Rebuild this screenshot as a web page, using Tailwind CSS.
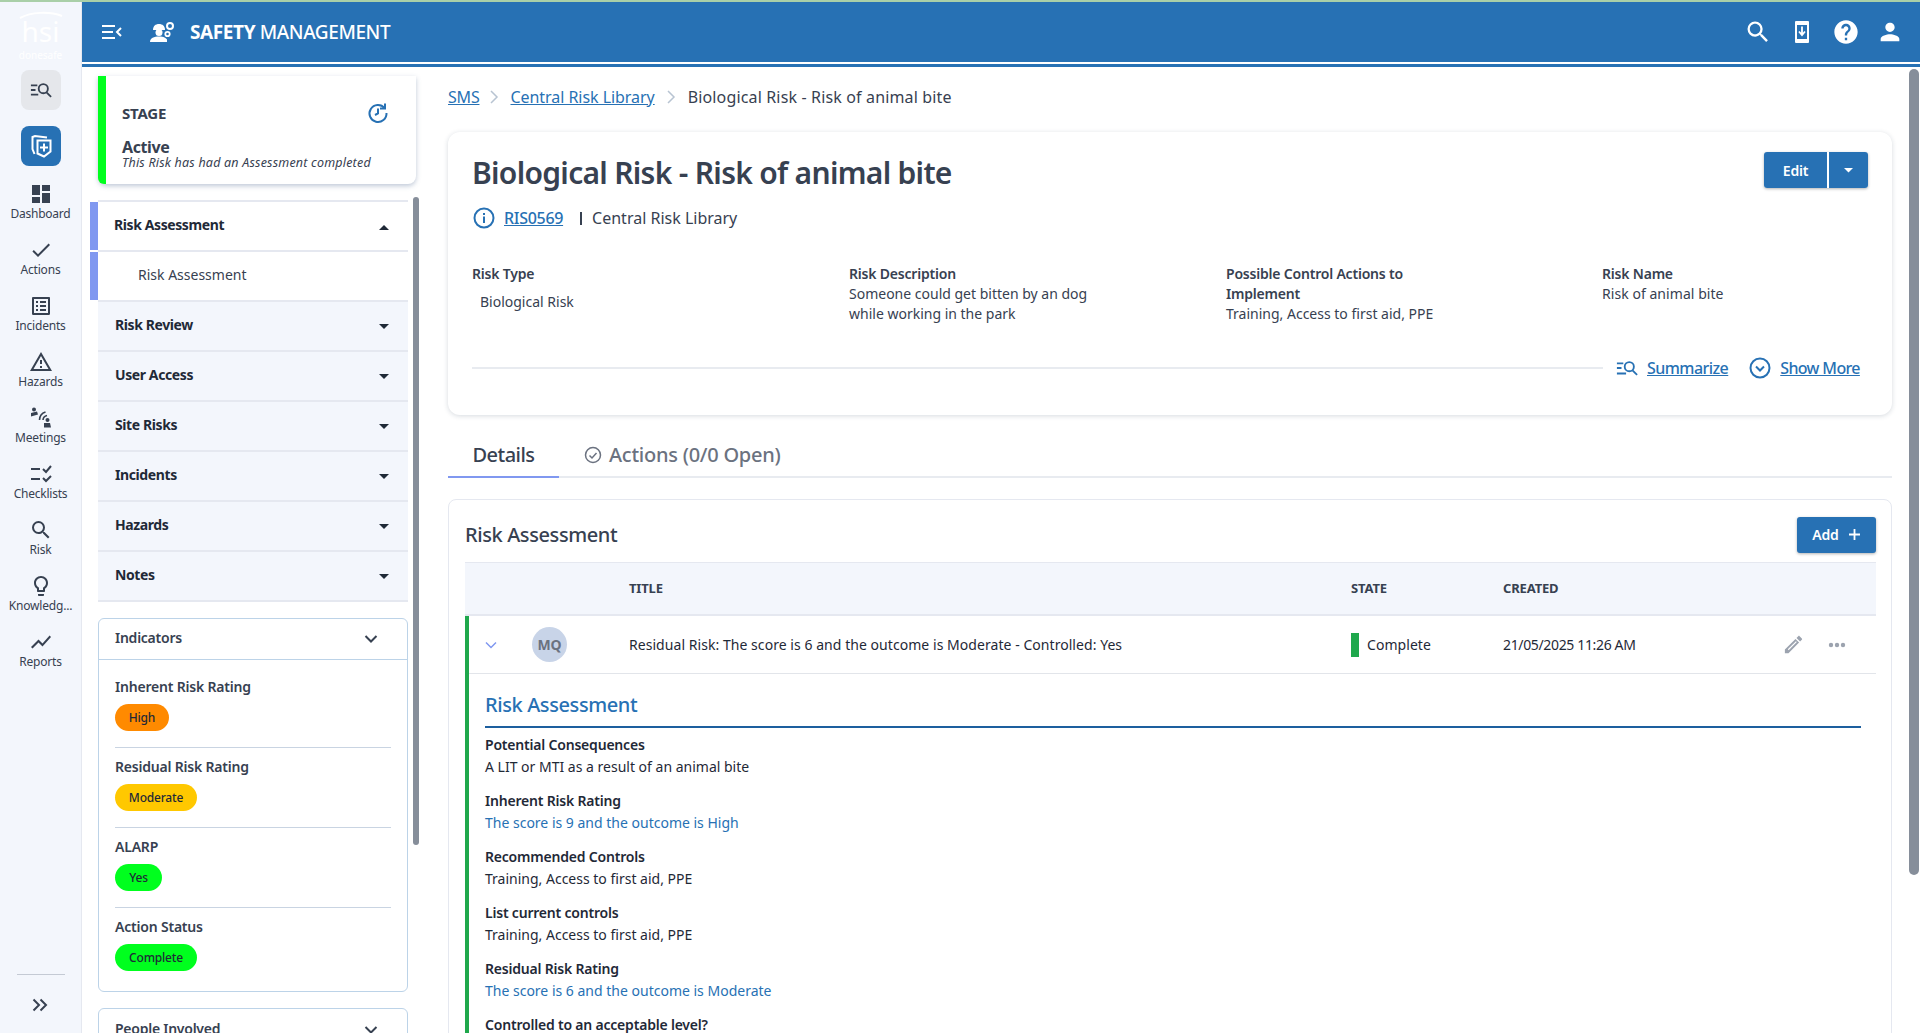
<!DOCTYPE html>
<html lang="en">
<head>
<meta charset="utf-8">
<title>Biological Risk - Risk of animal bite</title>
<script src="https://cdn.jsdelivr.net/npm/@tailwindcss/browser@4"></script>
</head>
<body class="h-[1033px] w-[1920px] overflow-hidden bg-white font-['Noto_Sans',sans-serif] text-[#374151]">
<div class="h-[2px] bg-[#a9cfa8]"></div>
<div class="flex h-[1031px]">
  <!-- Rail -->
  <aside class="flex w-[82px] shrink-0 flex-col items-center border-r border-[#e5e8f0] bg-[#f3f6fc]">
    <div class="flex h-[68px] w-full flex-col items-center pt-[9px] text-white">
      <svg width="44" height="8" viewBox="0 0 44 8"><path d="M1 7C12 1 30 0 43 5" fill="none" stroke="#ffffff" stroke-width="2"/></svg>
      <span class="mt-[-5px] text-[28px] leading-[34px]">hsi</span>
      <span class="text-[10px] leading-[14px]">donesafe</span>
    </div>
    <div class="flex h-[40px] w-[40px] items-center justify-center rounded-lg bg-[#e5e7eb]">
      <svg width="22" height="22" viewBox="0 0 24 24" fill="none" stroke="#374151" stroke-width="2"><path d="M1 7h7M1 12h5M1 17h8"/><circle cx="14.500" cy="10.500" r="5"/><path d="M18 14.500l5 5"/></svg>
    </div>
    <div class="mt-[16px] flex h-[40px] w-[40px] items-center justify-center rounded-lg bg-[#2771b4]">
      <svg width="26" height="26" viewBox="0 0 26 26" fill="none" stroke="#fff" stroke-width="2"><path d="M19 4.500L7 3 4.500 4v12l2 5"/><path d="M9.500 7.500h13v11l-6.500 5-6.500-3z"/><path d="M16 10.500v8M12 14.500h8"/></svg>
    </div>
    <div class="mt-[16px] flex h-[56px] w-full flex-col items-center">
      <svg class="h-[24px] w-[24px]" viewBox="0 0 24 24" fill="#374151"><path d="M3 13h8V3H3v10zm0 8h8v-6H3v6zm10 0h8V11h-8v10zm0-18v6h8V3h-8z"/></svg>
      <span class="text-[12px] leading-[16px] tracking-[-0.25px]">Dashboard</span>
    </div>
    <div class="flex h-[56px] w-full flex-col items-center">
      <svg class="h-[24px] w-[24px]" viewBox="0 0 24 24" fill="#374151"><path d="M9 16.170L4.830 12l-1.420 1.410L9 19 21 7l-1.410-1.410z"/></svg>
      <span class="text-[12px] leading-[16px] tracking-[-0.2px]">Actions</span>
    </div>
    <div class="flex h-[56px] w-full flex-col items-center">
      <svg class="h-[24px] w-[24px]" viewBox="0 0 24 24" fill="#374151"><path d="M19 5v14H5V5h14m1.100-2H3.900c-.5 0-.9.4-.9.9v16.200c0 .4.4.9.9.9h16.200c.4 0 .9-.5.9-.9V3.900c0-.5-.5-.9-.9-.9zM11 7h6v2h-6V7zm0 4h6v2h-6v-2zm0 4h6v2h-6zM7 7h2v2H7zm0 4h2v2H7zm0 4h2v2H7z"/></svg>
      <span class="text-[12px] leading-[16px] tracking-[-0.2px]">Incidents</span>
    </div>
    <div class="flex h-[56px] w-full flex-col items-center">
      <svg class="h-[24px] w-[24px]" viewBox="0 0 24 24" fill="#374151"><path d="M12 5.990L19.530 19H4.470L12 5.990M12 2L1 21h22L12 2zm1 14h-2v2h2v-2zm0-6h-2v4h2v-4z"/></svg>
      <span class="text-[12px] leading-[16px] tracking-[-0.2px]">Hazards</span>
    </div>
    <div class="flex h-[56px] w-full flex-col items-center">
      <svg class="h-[24px] w-[24px]" viewBox="0 0 24 24" fill="none" stroke="#374151" stroke-width="1.600"><circle cx="5" cy="3.500" r="2" fill="#374151" stroke="none"/><path d="M2 7l6-1.500 1 3-7 2z" fill="#374151" stroke="none"/><path d="M14 14a5 5 0 0 1 4-4.500M10.500 14a8.500 8.500 0 0 1 6-8"/><circle cx="18.500" cy="14" r="2" fill="#374151" stroke="none"/><path d="M15 17h6l1 4.500h-7z" fill="#374151" stroke="none"/></svg>
      <span class="text-[12px] leading-[16px] tracking-[-0.2px]">Meetings</span>
    </div>
    <div class="flex h-[56px] w-full flex-col items-center">
      <svg class="h-[24px] w-[24px]" viewBox="0 0 24 24" fill="none" stroke="#374151" stroke-width="2"><path d="M2 7h9M2 17h9M14 7l3 3 5-6M14 16l3 3 5-5"/></svg>
      <span class="text-[12px] leading-[16px] tracking-[-0.25px]">Checklists</span>
    </div>
    <div class="flex h-[56px] w-full flex-col items-center">
      <svg class="h-[24px] w-[24px]" viewBox="0 0 24 24" fill="#374151"><path d="M15.500 14h-.79l-.28-.27A6.471 6.471 0 0 0 16 9.500 6.500 6.500 0 1 0 9.500 16c1.610 0 3.090-.59 4.230-1.570l.27.28v.79l5 4.990L20.490 19l-4.990-5zm-6 0C7.010 14 5 11.990 5 9.500S7.010 5 9.500 5 14 7.010 14 9.500 11.990 14 9.500 14z"/></svg>
      <span class="text-[12px] leading-[16px] tracking-[-0.2px]">Risk</span>
    </div>
    <div class="flex h-[56px] w-full flex-col items-center">
      <svg class="h-[24px] w-[24px]" viewBox="0 0 24 24" fill="#374151"><path d="M9 21c0 .55.45 1 1 1h4c.55 0 1-.45 1-1v-1H9v1zm3-19C8.140 2 5 5.140 5 9c0 2.380 1.190 4.470 3 5.740V17c0 .55.45 1 1 1h6c.55 0 1-.45 1-1v-2.260c1.810-1.270 3-3.360 3-5.740 0-3.860-3.140-7-7-7zm2.850 11.100l-.85.6V16h-4v-2.300l-.85-.6C7.800 12.160 7 10.630 7 9c0-2.760 2.240-5 5-5s5 2.240 5 5c0 1.630-.8 3.160-2.150 4.100z"/></svg>
      <span class="text-[12px] leading-[16px] tracking-[-0.2px]">Knowledg...</span>
    </div>
    <div class="flex h-[56px] w-full flex-col items-center">
      <svg class="h-[24px] w-[24px]" viewBox="0 0 24 24" fill="#374151"><path d="M3.500 18.490l6-6.010 4 4L22 6.920l-1.410-1.410-7.090 7.970-4-4L2 16.990z"/></svg>
      <span class="text-[12px] leading-[16px] tracking-[-0.2px]">Reports</span>
    </div>
    <div class="mt-auto h-[1px] w-[48px] bg-[#c4cad4]"></div>
    <div class="mb-[16px] mt-[18px] flex h-[24px] items-center">
      <svg width="20" height="20" viewBox="0 0 20 20" fill="none" stroke="#374151" stroke-width="2"><path d="M2.500 4.500l5.500 5.500-5.500 5.500M9.500 4.500l5.500 5.500-5.500 5.500"/></svg>
    </div>
  </aside>

  <div class="flex min-w-0 flex-1 flex-col">
    <!-- Header -->
    <header class="flex h-[60px] shrink-0 items-center bg-[#2771b4] text-white">
      <svg class="ml-[19px]" width="22" height="22" viewBox="0 0 22 22" fill="none" stroke="#fff" stroke-width="2"><path d="M1 5h13M1 11h11M1 17h13M20 7l-4 4 4 4"/></svg>
      <svg class="ml-[27px]" width="26" height="24" viewBox="0 0 26 24" fill="#fff"><path d="M3 10c0-4 2.500-6 6-6s6 2 6 6z"/><circle cx="9" cy="12.500" r="3.500"/><path d="M0 22c0-4 4-5.500 9-5.500s7 1.500 8 3v2.500z"/><circle cx="20" cy="6" r="3" fill="none" stroke="#fff" stroke-width="2"/><circle cx="17.500" cy="14" r="2.200" fill="none" stroke="#fff" stroke-width="1.800"/></svg>
      <div class="ml-[14px] text-[19px] leading-[28px] tracking-[-0.4px]"><span class="font-bold">SAFETY</span> <span class="font-medium">MANAGEMENT</span></div>
      <div class="ml-auto flex items-center gap-[16px] pr-[16px]">
        <svg width="28" height="28" viewBox="0 0 24 24" fill="#fff"><path d="M15.500 14h-.79l-.28-.27A6.471 6.471 0 0 0 16 9.500 6.500 6.500 0 1 0 9.500 16c1.610 0 3.090-.59 4.230-1.570l.27.28v.79l5 4.990L20.490 19l-4.990-5zm-6 0C7.010 14 5 11.990 5 9.500S7.010 5 9.500 5 14 7.010 14 9.500 11.990 14 9.500 14z"/></svg>
        <svg width="28" height="28" viewBox="0 0 28 28"><rect x="7" y="3" width="14" height="22" rx="1" fill="#fff"/><rect x="9" y="7" width="10" height="14" fill="#2771b4"/><path d="M14 8.500v8M11 13.500l3 3.500 3-3.500" fill="none" stroke="#fff" stroke-width="1.800"/></svg>
        <svg width="28" height="28" viewBox="0 0 24 24" fill="#fff"><path d="M12 2C6.480 2 2 6.480 2 12s4.480 10 10 10 10-4.480 10-10S17.520 2 12 2zm1 17h-2v-2h2v2zm2.070-7.750l-.9.92C13.450 12.900 13 13.500 13 15h-2v-.5c0-1.100.45-2.100 1.170-2.830l1.240-1.260c.37-.36.59-.86.59-1.410 0-1.100-.9-2-2-2s-2 .9-2 2H8c0-2.210 1.790-4 4-4s4 1.790 4 4c0 .88-.36 1.680-.93 2.250z"/></svg>
        <svg width="28" height="28" viewBox="0 0 24 24" fill="#fff"><path d="M12 12c2.210 0 4-1.790 4-4s-1.790-4-4-4-4 1.790-4 4 1.790 4 4 4zm0 2c-2.670 0-8 1.340-8 4v2h16v-2c0-2.660-5.330-4-8-4z"/></svg>
      </div>
    </header>
    <div class="h-[2px] shrink-0 bg-white"></div>
    <div class="h-[3px] shrink-0 bg-[#2771b4]"></div>

    <div class="flex min-h-0 flex-1">
      <!-- Left panel -->
      <div class="flex w-[342px] shrink-0 flex-col overflow-hidden">
        <section class="ml-[16px] mt-[9px] flex h-[108px] w-[318px] shrink-0 rounded-b-lg bg-white shadow-[0_2px_5px_rgba(71,98,140,0.35)]">
          <div class="w-[8px] shrink-0 rounded-bl-md bg-[#00ff1e]"></div>
          <div class="flex-1 pl-[16px] pr-[27px]">
            <div class="mt-[26px] flex items-center justify-between">
              <span class="text-[15px] font-bold leading-[20px] tracking-[-0.2px]">STAGE</span>
              <svg width="22" height="22" viewBox="0 0 22 22" fill="none" stroke="#2771b4" stroke-width="2"><path d="M17.500 6A8.500 8.500 0 1 0 19.500 11"/><path d="M18 1.500V6.500h-5" /><path d="M11 6.500V11.500l-3 1.500"/></svg>
            </div>
            <div class="mt-[14px] text-[16px] font-bold leading-[18px] tracking-[-0.4px]">Active</div>
            <div class="text-[12.500px] italic leading-[14px] tracking-[0.2px]">This Risk has had an Assessment completed</div>
          </div>
        </section>
        <div class="mt-[13px] flex min-h-0 flex-1 pl-[8px]">
          <div class="w-[318px] shrink-0">
            <div class="mt-[3px] ml-[8px] h-[2px] w-[310px] bg-[#e5e8f0]"></div>
            <div class="flex h-[50px]">
              <div class="h-[48px] w-[8px] shrink-0 bg-[#8098f0]"></div>
              <div class="flex flex-1 items-center justify-between border-b-2 border-[#e5e8f0] bg-white pb-[4px] pl-[16px] pr-[18px] text-[14px] font-bold tracking-[-0.4px] text-[#1f2937]">Risk Assessment<svg class="mt-[6px]" width="12" height="6" viewBox="0 0 12 6" fill="#1f2937"><path d="M1 6l5-5 5 5z"/></svg></div>
            </div>
            <div class="flex h-[50px]">
              <div class="h-[48px] w-[8px] shrink-0 bg-[#8098f0]"></div>
              <div class="flex flex-1 items-center border-b-2 border-[#e5e8f0] bg-white pb-[4px] pl-[40px] text-[14px] tracking-[0px]">Risk Assessment</div>
            </div>
            <div class="ml-[8px] flex h-[50px] items-center justify-between border-b-2 border-[#e5e8f0] bg-[#f3f6fc] pb-[4px] pl-[17px] pr-[18px] text-[14px] font-bold tracking-[-0.4px] text-[#1f2937]">Risk Review<svg class="mt-[6px]" width="12" height="6" viewBox="0 0 12 6" fill="#1f2937"><path d="M1 0l5 5 5-5z"/></svg></div>
            <div class="ml-[8px] flex h-[50px] items-center justify-between border-b-2 border-[#e5e8f0] bg-[#f3f6fc] pb-[4px] pl-[17px] pr-[18px] text-[14px] font-bold tracking-[-0.4px] text-[#1f2937]">User Access<svg class="mt-[6px]" width="12" height="6" viewBox="0 0 12 6" fill="#1f2937"><path d="M1 0l5 5 5-5z"/></svg></div>
            <div class="ml-[8px] flex h-[50px] items-center justify-between border-b-2 border-[#e5e8f0] bg-[#f3f6fc] pb-[4px] pl-[17px] pr-[18px] text-[14px] font-bold tracking-[-0.4px] text-[#1f2937]">Site Risks<svg class="mt-[6px]" width="12" height="6" viewBox="0 0 12 6" fill="#1f2937"><path d="M1 0l5 5 5-5z"/></svg></div>
            <div class="ml-[8px] flex h-[50px] items-center justify-between border-b-2 border-[#e5e8f0] bg-[#f3f6fc] pb-[4px] pl-[17px] pr-[18px] text-[14px] font-bold tracking-[-0.4px] text-[#1f2937]">Incidents<svg class="mt-[6px]" width="12" height="6" viewBox="0 0 12 6" fill="#1f2937"><path d="M1 0l5 5 5-5z"/></svg></div>
            <div class="ml-[8px] flex h-[50px] items-center justify-between border-b-2 border-[#e5e8f0] bg-[#f3f6fc] pb-[4px] pl-[17px] pr-[18px] text-[14px] font-bold tracking-[-0.4px] text-[#1f2937]">Hazards<svg class="mt-[6px]" width="12" height="6" viewBox="0 0 12 6" fill="#1f2937"><path d="M1 0l5 5 5-5z"/></svg></div>
            <div class="ml-[8px] flex h-[50px] items-center justify-between border-b-2 border-[#e5e8f0] bg-[#f3f6fc] pb-[4px] pl-[17px] pr-[18px] text-[14px] font-bold tracking-[-0.4px] text-[#1f2937]">Notes<svg class="mt-[6px]" width="12" height="6" viewBox="0 0 12 6" fill="#1f2937"><path d="M1 0l5 5 5-5z"/></svg></div>

            <div class="ml-[8px] mt-[16px] h-[374px] w-[310px] rounded-md border border-[#bcd3e8]">
              <div class="flex h-[41px] items-center justify-between border-b border-[#bcd3e8] pb-[3px] pl-[16px] pr-[29px] text-[14px] font-semibold tracking-[-0.25px]">Indicators<svg class="mt-[3px]" width="14" height="10" viewBox="0 0 14 10" fill="none" stroke="#374151" stroke-width="2"><path d="M1.500 2l5.500 5.500L12.500 2"/></svg></div>
              <div class="px-[16px]">
                <div class="flex h-[88px] flex-col items-start border-b border-[#c9d4e2] pt-[17px]">
                  <div class="text-[14px] font-semibold leading-[20px] tracking-[-0.2px]">Inherent Risk Rating</div>
                  <div class="mt-[7px] flex h-[27px] w-[54px] items-center justify-center rounded-full bg-[#ff8a00] text-[12px] font-medium tracking-[-0.2px] text-[#1f2937]">High</div>
                </div>
                <div class="flex h-[80px] flex-col items-start border-b border-[#c9d4e2] pt-[9px]">
                  <div class="text-[14px] font-semibold leading-[20px] tracking-[-0.2px]">Residual Risk Rating</div>
                  <div class="mt-[7px] flex h-[27px] w-[82px] items-center justify-center rounded-full bg-[#ffc800] text-[12px] font-medium tracking-[-0.2px] text-[#1f2937]">Moderate</div>
                </div>
                <div class="flex h-[80px] flex-col items-start border-b border-[#c9d4e2] pt-[9px]">
                  <div class="text-[14px] font-semibold leading-[20px] tracking-[-0.2px]">ALARP</div>
                  <div class="mt-[7px] flex h-[27px] w-[47px] items-center justify-center rounded-full bg-[#00ff1e] text-[12px] font-medium tracking-[-0.2px] text-[#1f2937]">Yes</div>
                </div>
                <div class="flex h-[80px] flex-col items-start pt-[9px]">
                  <div class="text-[14px] font-semibold leading-[20px] tracking-[-0.2px]">Action Status</div>
                  <div class="mt-[7px] flex h-[27px] w-[82px] items-center justify-center rounded-full bg-[#00ff1e] text-[12px] font-medium tracking-[-0.2px] text-[#1f2937]">Complete</div>
                </div>
              </div>
            </div>
            <div class="ml-[8px] mt-[16px] flex h-[60px] w-[310px] items-start justify-between rounded-md border border-[#bcd3e8] pl-[16px] pr-[29px] pt-[10px] text-[14px] font-semibold leading-[20px] tracking-[-0.25px]">People Involved<svg class="mt-[6px]" width="14" height="10" viewBox="0 0 14 10" fill="none" stroke="#374151" stroke-width="2"><path d="M1.500 2l5.500 5.500L12.500 2"/></svg></div>
          </div>
          <div class="ml-[5px] h-[648px] w-[6px] shrink-0 rounded-full bg-[#868e9a]"></div>
        </div>
      </div>

      <!-- Main -->
      <main class="min-w-0 flex-1 overflow-hidden pl-[24px] pr-[17px]">
        <nav class="flex h-[65px] items-center pb-[6px] text-[16px]">
          <a class="tracking-[-0.2px] text-[#2771b4] underline">SMS</a>
          <svg class="mx-[11px]" width="9" height="14" viewBox="0 0 9 14" fill="none" stroke="#b8c4d2" stroke-width="1.500"><path d="M1 1l6 6-6 6"/></svg>
          <a class="tracking-[-0.05px] text-[#2771b4] underline">Central Risk Library</a>
          <svg class="mx-[12px]" width="9" height="14" viewBox="0 0 9 14" fill="none" stroke="#b8c4d2" stroke-width="1.500"><path d="M1 1l6 6-6 6"/></svg>
          <span class="tracking-[0.15px]">Biological Risk - Risk of animal bite</span>
        </nav>
        <section class="h-[283px] rounded-xl bg-white pl-[24px] pr-[24px] shadow-[0_1px_5px_rgba(30,50,80,0.18)]">
          <div class="flex items-start justify-between pt-[20px]">
            <h1 class="text-[30px] font-semibold leading-[42px] tracking-[-0.7px] text-[#374151]">Biological Risk - Risk of animal bite</h1>
            <div class="flex h-[36px] overflow-hidden rounded-[3px] text-[14px] font-semibold text-white shadow-[0_1px_3px_rgba(0,0,0,0.3)]">
              <span class="flex w-[63px] items-center justify-center bg-[#2771b4] tracking-[-0.2px]">Edit</span>
              <span class="flex w-[41px] items-center justify-center border-l-2 border-white bg-[#2771b4]"><svg width="11" height="5" viewBox="0 0 11 5" fill="#fff"><path d="M1 0l4.500 4.500L10 0z"/></svg></span>
            </div>
          </div>
          <div class="mt-[8px] flex h-[32px] items-center text-[16px]">
            <svg class="ml-[1px]" width="22" height="22" viewBox="0 0 22 22" fill="none" stroke="#2771b4" stroke-width="2"><circle cx="11" cy="11" r="9.500"/><path d="M11 9.500v6.500M11 6v2"/></svg>
            <a class="ml-[9px] font-medium tracking-[-0.3px] text-[#2771b4] underline">RIS0569</a>
            <span class="ml-[17px] h-[13px] w-[2px] bg-[#374151]"></span>
            <span class="ml-[10px] tracking-[0px]">Central Risk Library</span>
          </div>
          <div class="mt-[30px] grid h-[74px] grid-cols-[377px_377px_376px_1fr] text-[14px] leading-[20px]">
            <div>
              <div class="font-semibold tracking-[-0.2px]">Risk Type</div>
              <div class="ml-[8px] mt-[8px]">Biological Risk</div>
            </div>
            <div>
              <div class="font-semibold tracking-[-0.2px]">Risk Description</div>
              <div class="w-[260px]">Someone could get bitten by an dog while working in the park</div>
            </div>
            <div>
              <div class="w-[240px] font-semibold tracking-[-0.2px]">Possible Control Actions to Implement</div>
              <div>Training, Access to first aid, PPE</div>
            </div>
            <div>
              <div class="font-semibold tracking-[-0.2px]">Risk Name</div>
              <div class="tracking-[0.05px]">Risk of animal bite</div>
            </div>
          </div>
          <div class="mt-[18px] flex h-[24px] items-center">
            <div class="h-[2px] w-[1131px] bg-[#e8ebf0]"></div>
            <svg class="ml-[13px]" width="22" height="22" viewBox="0 0 24 24" fill="none" stroke="#2771b4" stroke-width="2"><path d="M1 7h7M1 12h5M1 18h10"/><circle cx="14.500" cy="10.500" r="5"/><path d="M18 14.500l5 5"/></svg>
            <a class="ml-[9px] text-[16px] font-medium tracking-[-0.55px] text-[#2771b4] underline">Summarize</a>
            <svg class="ml-[21px]" width="22" height="22" viewBox="0 0 22 22" fill="none" stroke="#2771b4" stroke-width="2"><circle cx="11" cy="11" r="9.500"/><path d="M7 9.500l4 4 4-4"/></svg>
            <a class="ml-[9px] text-[16px] font-medium tracking-[-0.65px] text-[#2771b4] underline">Show More</a>
          </div>
        </section>
        <!-- Tabs -->
        <div class="mt-[20px] flex h-[43px] items-start border-b-2 border-[#e8ebf0]">
          <div class="flex h-[43px] w-[111px] justify-center border-b-2 border-[#8098f0] pt-[8px] text-[20px] font-medium leading-[24px] tracking-[-0.5px]">Details</div>
          <div class="ml-[25px] flex items-center pt-[8px] text-[20px] font-medium leading-[24px] tracking-[-0.25px] text-[#6b7280]">
            <svg class="mr-[7px]" width="18" height="18" viewBox="0 0 18 18" fill="none" stroke="#6b7280" stroke-width="1.500"><circle cx="9" cy="9" r="7.500"/><path d="M5.500 9.500l2.500 2.500 4.500-5"/></svg>
            Actions (0/0 Open)
          </div>
        </div>
        <!-- Panel -->
        <section class="mt-[21px] h-[600px] rounded-t-lg border border-[#e5e8f0] pl-[16px] pr-[15px]">
          <div class="flex h-[62px] items-center justify-between pt-[7px]">
            <h2 class="text-[20px] font-medium tracking-[-0.4px]">Risk Assessment</h2>
            <div class="flex h-[36px] w-[79px] items-center justify-center gap-[9px] rounded-[3px] bg-[#2771b4] text-[14px] font-semibold text-white shadow-[0_1px_3px_rgba(0,0,0,0.3)]"><span class="tracking-[-0.2px]">Add</span><svg width="13" height="13" viewBox="0 0 13 13" fill="none" stroke="#fff" stroke-width="1.800"><path d="M6.500 1v11M1 6.500h11"/></svg></div>
          </div>
          <div class="grid h-[54px] grid-cols-[164px_722px_152px_1fr] items-center border-b-2 border-t border-[#e5e8f0] bg-[#f3f6fc] text-[13px] font-bold tracking-[-0.15px]">
            <span></span><span>TITLE</span><span>STATE</span><span>CREATED</span>
          </div>
          <div class="border-l-4 border-[#1fa84c]">
            <div class="grid h-[58px] grid-cols-[160px_722px_152px_1fr] items-center border-b border-[#e2e5ea] text-[14px] tracking-[0.05px] text-[#1f2937]">
              <div class="flex items-center pl-[16px]">
                <svg width="12" height="8" viewBox="0 0 12 8" fill="none" stroke="#8098f0" stroke-width="1.500"><path d="M1 1.500l5 5 5-5"/></svg>
                <span class="ml-[35px] flex h-[35px] w-[35px] items-center justify-center rounded-full bg-[#c8d4e8] text-[14px] font-bold tracking-[-0.2px] text-[#6b7280]">MQ</span>
              </div>
              <span>Residual Risk: The score is 6 and the outcome is Moderate - Controlled: Yes</span>
              <div class="flex items-center"><span class="mr-[8px] h-[24px] w-[8px] bg-[#1fa84c]"></span>Complete</div>
              <div class="flex items-center justify-between pr-[30px]">
                <span class="tracking-[-0.35px]">21/05/2025 11:26 AM</span>
                <div class="flex items-center gap-[23px]">
                  <svg width="23" height="23" viewBox="0 0 24 24"><path d="M3 17.250V21h3.750L17.810 9.940l-3.750-3.750L3 17.250zM20.710 7.040c.39-.39.39-1.020 0-1.410l-2.340-2.340c-.39-.39-1.020-.39-1.410 0l-1.830 1.830 3.750 3.750 1.830-1.830z" fill="#9ca3af"/><path d="M6.500 17.500l8.500-8.500" stroke="#fff" stroke-width="1.200"/></svg>
                  <svg width="18" height="6" viewBox="0 0 18 6" fill="#9ca3af"><circle cx="3" cy="3" r="2.200"/><circle cx="9" cy="3" r="2.200"/><circle cx="15" cy="3" r="2.200"/></svg>
                </div>
              </div>
            </div>
            <div class="pl-[16px] pr-[15px] text-[14px] leading-[20px] text-[#1f2937]">
              <h3 class="flex h-[54px] items-end border-b-2 border-[#1d5f9e] pb-[7px] text-[20px] font-medium leading-[28px] tracking-[-0.4px] text-[#2771b4]">Risk Assessment</h3>
              <div class="mt-[7px] font-semibold tracking-[-0.2px]">Potential Consequences</div>
              <div class="mt-[2px]">A LIT or MTI as a result of an animal bite</div>
              <div class="mt-[14px] font-semibold tracking-[-0.2px]">Inherent Risk Rating</div>
              <div class="mt-[2px] text-[#2771b4]">The score is 9 and the outcome is High</div>
              <div class="mt-[14px] font-semibold tracking-[-0.2px]">Recommended Controls</div>
              <div class="mt-[2px]">Training, Access to first aid, PPE</div>
              <div class="mt-[14px] font-semibold tracking-[-0.2px]">List current controls</div>
              <div class="mt-[2px]">Training, Access to first aid, PPE</div>
              <div class="mt-[14px] font-semibold tracking-[-0.2px]">Residual Risk Rating</div>
              <div class="mt-[2px] text-[#2771b4]">The score is 6 and the outcome is Moderate</div>
              <div class="mt-[14px] font-semibold tracking-[-0.2px]">Controlled to an acceptable level?</div>
            </div>
          </div>
        </section>
      </main>
      <div class="mt-[2px] mr-[1px] h-[806px] w-[10px] shrink-0 rounded-full bg-[#868e9a]"></div>
    </div>
  </div>
</div>
</body>
</html>
